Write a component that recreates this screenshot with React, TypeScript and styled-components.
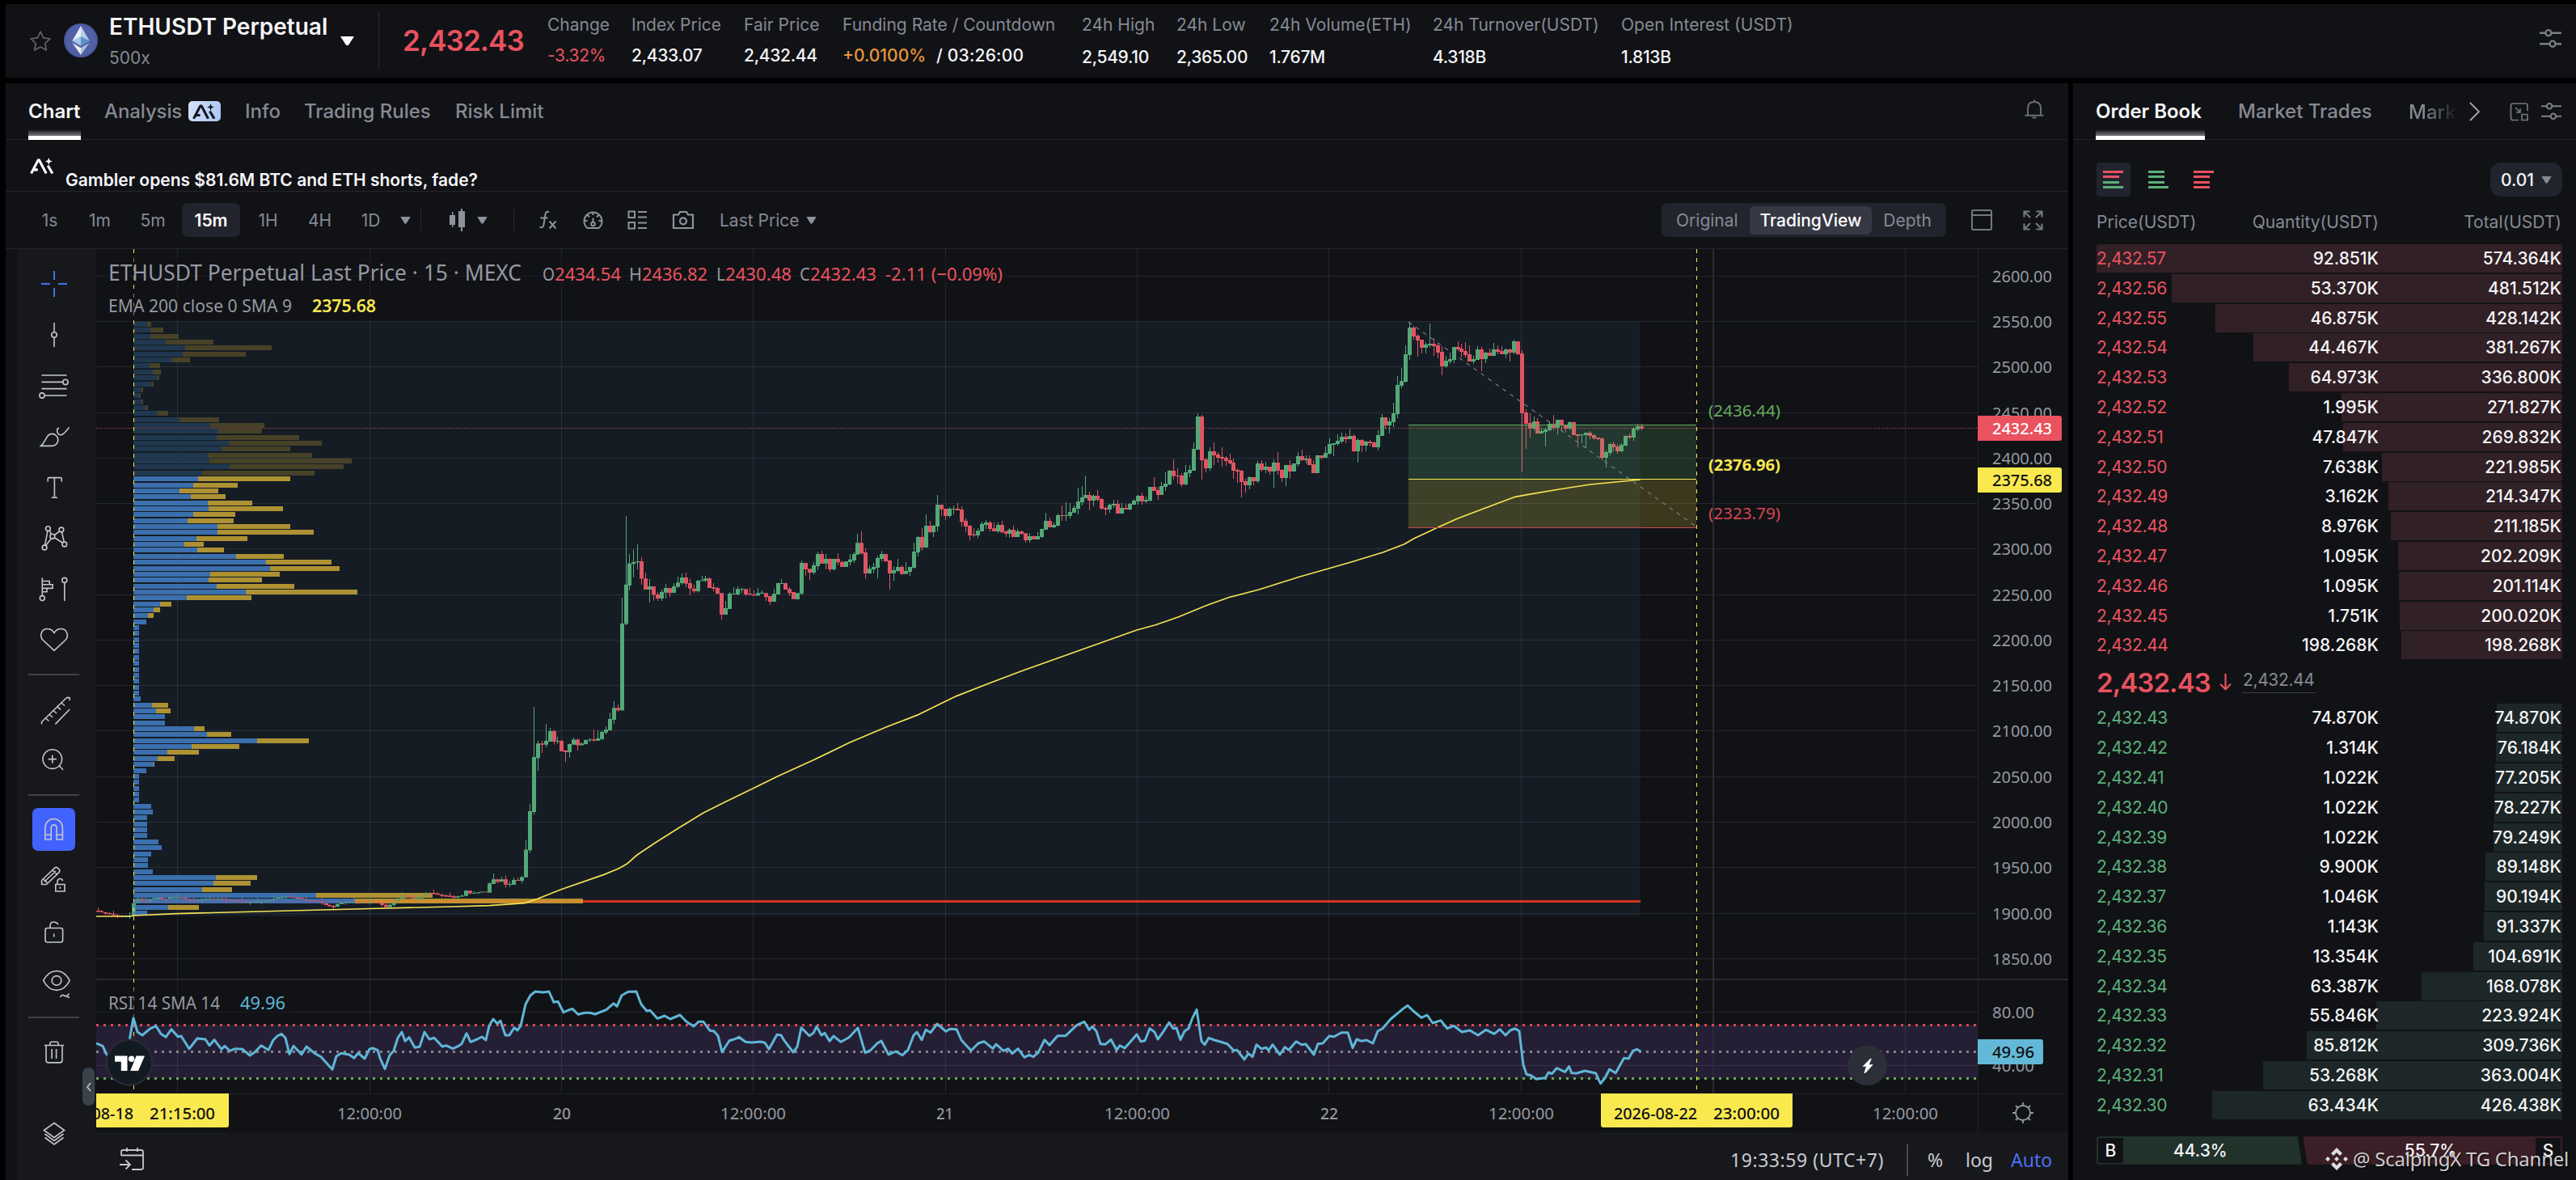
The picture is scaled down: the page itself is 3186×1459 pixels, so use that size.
import React from "react";
import styled, { createGlobalStyle, css } from "styled-components";

const INTER = `Inter, "Liberation Sans", sans-serif`;
const CHART_FONT = `"Noto Sans", "Open Sans", sans-serif`;

const c = {
  panel: "#111216",
  tool: "#17181c",
  line: "#24252b",
  dim: "#868993",
  icon: "#6a6c73",
  white: "#f5f5f7",
  red: "#e9525f",
  green: "#5bb078",
  blue: "#4262ff",
  chip: "#22242d",
};

const Global = createGlobalStyle`
  html, body { margin: 0; padding: 0; background: #000; }
  * { box-sizing: border-box; }
  svg { display: block; flex: none; }
`;

const Page = styled.div`
  width: 3186px;
  height: 1459px;
  padding: 5px 0 0 7px;
  background: #000;
  color: ${c.white};
  font-family: ${INTER};
  font-size: 21px;
  display: flex;
  flex-direction: column;
  gap: 7px;
  overflow: hidden;
`;

const TopBar = styled.header`
  height: 91px;
  flex: none;
  display: flex;
  background: ${c.panel};
  padding-left: 29px;
`;

const StarSlot = styled.div`
  width: 43px;
  padding-top: 32px;
`;
const CoinSlot = styled.div`
  width: 56px;
  padding-top: 24px;
`;
const Pair = styled.div`
  width: 286px;
  display: flex;
  flex-direction: column;
  padding-top: 11px;
`;
const PairName = styled.div`
  font-size: 28px;
  line-height: 34px;
  font-weight: 600;
  letter-spacing: 0;
  white-space: nowrap;
`;
const Leverage = styled.div`
  margin-top: 9px;
  line-height: 26px;
  color: ${c.dim};
`;
const Caret = styled.i<{ $w?: number; $h?: number; $color?: string; $ml?: number; $mt?: number }>`
  flex: none;
  width: ${(p) => p.$w ?? 13}px;
  height: ${(p) => p.$h ?? 9}px;
  margin-left: ${(p) => p.$ml ?? 0}px;
  margin-top: ${(p) => p.$mt ?? 0}px;
  background: ${(p) => p.$color ?? "#8f929c"};
  clip-path: polygon(0 0, 100% 0, 58% 100%, 42% 100%);
`;
const VRule = styled.i<{ $h: number; $ml?: number; $mt?: number; $w?: number; $color?: string }>`
  flex: none;
  width: ${(p) => p.$w ?? 1}px;
  height: ${(p) => p.$h}px;
  margin-left: ${(p) => p.$ml ?? 0}px;
  margin-top: ${(p) => p.$mt ?? 0}px;
  background: ${(p) => p.$color ?? "#2a2b31"};
`;
const BigPrice = styled.div`
  margin-left: 29px;
  width: 179px;
  padding-top: 24px;
  font-size: 35px;
  line-height: 42px;
  font-weight: 600;
  letter-spacing: -0.9px;
  color: ${c.red};
`;
const Stat = styled.div<{ $w: number; $gap?: number }>`
  width: ${(p) => p.$w}px;
  flex: none;
  display: flex;
  flex-direction: column;
  gap: ${(p) => p.$gap ?? 12}px;
  padding-top: 13px;
  line-height: 26px;
  white-space: nowrap;
`;
const StatLabel = styled.div`
  color: ${c.dim};
`;
const StatValue = styled.div<{ $color?: string; $light?: boolean }>`
  font-weight: ${(p) => (p.$light ? 400 : 500)};
  letter-spacing: -0.3px;
  color: ${(p) => p.$color ?? c.white};
`;
const Orange = styled.span`
  color: #e8963a;
  margin-right: 13px;
  letter-spacing: 0;
`;
const Countdown = styled.span`
  letter-spacing: 0.2px;
`;
const TopSettings = styled.div`
  margin-left: auto;
  padding: 29px 18px 0 0;
`;

const Columns = styled.div`
  flex: 1;
  display: flex;
  gap: 6px;
  min-height: 0;
`;
const MainPanel = styled.main`
  width: 2551px;
  flex: none;
  background: ${c.panel};
  display: flex;
  flex-direction: column;
`;

const TabBar = styled.nav<{ $pl: number }>`
  height: 70px;
  flex: none;
  display: flex;
  padding-left: ${(p) => p.$pl}px;
  border-bottom: 1px solid ${c.line};
`;
const Tab = styled.div<{ $on?: boolean; $w: number; $ls?: number; $ml?: number }>`
  height: 70px;
  flex: none;
  margin-right: 29px;
  margin-left: ${(p) => p.$ml ?? 0}px;
  width: ${(p) => p.$w}px;
  display: flex;
  align-items: center;
  gap: 8px;
  padding-bottom: 1px;
  font-size: 24px;
  font-weight: ${(p) => (p.$on ? 600 : 500)};
  letter-spacing: ${(p) => p.$ls ?? 0}px;
  white-space: nowrap;
  color: ${(p) => (p.$on ? c.white : c.dim)};
  ${(p) =>
    p.$on &&
    css`
      background: linear-gradient(#fff, #fff) bottom / 100% 5px no-repeat,
        linear-gradient(to top, rgba(255, 255, 255, 0.45), rgba(255, 255, 255, 0)) bottom 5px left 0 / 100% 8px
          no-repeat;
    `}
`;
const AiBadge = styled.span`
  width: 40px;
  height: 25px;
  border-radius: 5px;
  background: linear-gradient(110deg, #d7e3f8, #a9c4f2);
  display: flex;
  align-items: center;
  justify-content: center;
`;
const BellSlot = styled.div`
  margin-left: auto;
  padding: 20px 30px 0 0;
`;

const NewsRow = styled.div`
  height: 64px;
  flex: none;
  display: flex;
  gap: 13px;
  padding: 22px 0 0 30px;
  border-bottom: 1px solid ${c.line};
`;
const NewsText = styled.div`
  padding-top: 15px;
  line-height: 26px;
  font-weight: 600;
  font-size: 21px;
  white-space: nowrap;
`;

const ToolRow = styled.div`
  height: 71px;
  flex: none;
  display: flex;
  align-items: center;
  padding: 0 31px 0 28px;
  border-bottom: 1px solid ${c.line};
`;
const Intervals = styled.div`
  display: flex;
  gap: 6px;
`;
const Interval = styled.div<{ $on?: boolean; $w: number }>`
  width: ${(p) => p.$w}px;
  height: 42px;
  display: flex;
  align-items: center;
  justify-content: center;
  border-radius: 7px;
  color: ${(p) => (p.$on ? "#fff" : c.dim)};
  background: ${(p) => (p.$on ? c.chip : "transparent")};
  font-weight: ${(p) => (p.$on ? 600 : 400)};
`;
const IconSlot = styled.div<{ $ml: number; $pt?: number }>`
  margin-left: ${(p) => p.$ml}px;
  padding-top: ${(p) => p.$pt ?? 0}px;
`;
const LastPrice = styled.div`
  margin-left: 31px;
  width: 99px;
  color: ${c.dim};
  white-space: nowrap;
`;
const Segmented = styled.div`
  margin-left: auto;
  width: 352px;
  height: 42px;
  display: flex;
  align-items: center;
  padding: 0 4px;
  border-radius: 7px;
  background: ${c.chip};
`;
const Segment = styled.div<{ $on?: boolean; $w: number }>`
  width: ${(p) => p.$w}px;
  height: 35px;
  display: flex;
  align-items: center;
  justify-content: center;
  border-radius: 6px;
  color: ${(p) => (p.$on ? "#fff" : c.dim)};
  background: ${(p) => (p.$on ? "#363844" : "transparent")};
  font-weight: ${(p) => (p.$on ? 500 : 400)};
`;

const ChartBody = styled.div`
  flex: 1;
  display: flex;
  min-height: 0;
  padding-left: 14px;
`;
const DrawBar = styled.aside`
  position: relative;
  width: 98px;
  flex: none;
  display: flex;
  flex-direction: column;
  align-items: center;
  padding: 12px 7px 0 0;
  background: ${c.tool};
`;
const DrawSlot = styled.div<{ $h: number }>`
  height: ${(p) => p.$h}px;
  flex: none;
  display: flex;
  align-items: center;
`;
const DrawRule = styled.i`
  width: 63px;
  height: 2px;
  background: #414247;
`;
const MagnetBox = styled.div`
  width: 53px;
  height: 53px;
  border-radius: 7px;
  background: ${c.blue};
  display: flex;
  align-items: center;
  justify-content: center;
`;
const Handle = styled.div`
  position: absolute;
  left: 81px;
  top: 1012px;
  width: 15px;
  height: 47px;
  border-radius: 7px;
  background: #3a424c;
  display: flex;
  align-items: center;
  justify-content: center;
`;
const ChartCol = styled.div`
  width: 2439px;
  display: flex;
  flex-direction: column;
`;
const BottomBar = styled.footer`
  flex: 1;
  display: flex;
  align-items: center;
  background: ${c.tool};
  padding: 9px 19px 0 28px;
`;
const BottomText = styled.div<{ $ml?: number; $w: number; $color?: string; $ls?: number }>`
  margin-left: ${(p) => p.$ml ?? 0}px;
  width: ${(p) => p.$w}px;
  font-family: ${CHART_FONT};
  font-size: 23px;
  line-height: 32px;
  letter-spacing: ${(p) => p.$ls ?? 0}px;
  white-space: nowrap;
  color: ${(p) => p.$color ?? "#c9cbd1"};
`;
const Spacer = styled.div`
  flex: 1;
`;

/* ---------- order book ---------- */
const Book = styled.section`
  position: relative;
  width: 622px;
  flex: none;
  background: ${c.panel};
  display: flex;
  flex-direction: column;
`;
const FadeTab = styled.div`
  width: 62px;
  height: 70px;
  margin-left: 14px;
  display: flex;
  align-items: center;
  font-size: 24px;
  font-weight: 500;
  color: transparent;
  background: linear-gradient(90deg, ${c.dim} 30%, rgba(134, 137, 147, 0.05) 95%);
  background-clip: text;
`;
const BookTools = styled.div`
  height: 71px;
  display: flex;
  padding: 28px 17px 0 29px;
`;
const DepthMode = styled.div<{ $on?: boolean; $mr: number }>`
  width: 42px;
  height: 42px;
  margin-right: ${(p) => p.$mr}px;
  border-radius: 4px;
  background: ${(p) => (p.$on ? c.chip : "transparent")};
  display: flex;
  flex-direction: column;
  padding: 10px 0 0 8px;
  gap: 3px;
`;
const DepthLine = styled.i<{ $w: number; $color: string }>`
  width: ${(p) => p.$w}px;
  height: 3px;
  margin-bottom: 0.4px;
  background: ${(p) => p.$color};
`;
const TickPill = styled.div`
  margin-left: auto;
  width: 89px;
  height: 42px;
  border-radius: 13px;
  background: ${c.chip};
  display: flex;
  align-items: center;
  padding-left: 13px;
  font-weight: 500;
`;
const BookHead = styled.div`
  height: 58px;
  display: grid;
  grid-template-columns: 148px 201px 1fr;
  padding: 16px 18px 0 29px;
  line-height: 30px;
  color: ${c.dim};
`;
const Cell = styled.div<{ $right?: boolean }>`
  text-align: ${(p) => (p.$right ? "right" : "left")};
`;
const Rows = styled.div`
  display: flex;
  flex-direction: column;
  gap: 1.8px;
  padding: 0 17px 0 29px;
`;
const Row = styled.div<{ $side: "ask" | "bid" }>`
  height: 35px;
  flex: none;
  display: grid;
  grid-template-columns: 148px 201px 1fr;
  align-items: center;
  padding-right: 1px;
  font-weight: 500;
  background-repeat: no-repeat;
  background-position: right top;
  background-image: ${(p) =>
    p.$side === "ask" ? "linear-gradient(#312026, #312026)" : "linear-gradient(#1d2727, #1d2727)"};
  ${Cell}:first-child {
    color: ${(p) => (p.$side === "ask" ? c.red : c.green)};
    font-weight: 400;
    letter-spacing: -0.35px;
  }
`;
const MidRow = styled.div`
  height: 55px;
  flex: none;
  display: flex;
  padding-left: 29px;
`;
const MidPrice = styled.div`
  width: 152px;
  padding-top: 8px;
  font-size: 33px;
  line-height: 42px;
  font-weight: 600;
  letter-spacing: -0.9px;
  color: ${c.red};
`;
const FairPrice = styled.div`
  margin-left: 14px;
  margin-top: 13px;
  height: 29px;
  line-height: 26px;
  letter-spacing: -0.35px;
  color: ${c.dim};
  border-bottom: 1px dotted #6b6e78;
`;
const Ratio = styled.div`
  display: flex;
  gap: 1px;
  margin: 21px 17px 0 29px;
  height: 35px;
  flex: none;
  font-weight: 500;
`;
const RatioSide = styled.div<{ $w: number; $sell?: boolean }>`
  width: ${(p) => p.$w}px;
  display: flex;
  flex-direction: ${(p) => (p.$sell ? "row-reverse" : "row")};
  padding: 2px;
  border-radius: 3px;
  background: ${(p) => (p.$sell ? "#3b1f27" : "#21322b")};
  clip-path: ${(p) =>
    p.$sell ? "polygon(0 0, 100% 0, 100% 100%, 6px 100%)" : "polygon(0 0, calc(100% - 5px) 0, 100% 100%, 0 100%)"};
`;
const RatioTag = styled.div`
  width: 31px;
  background: ${c.panel};
  border-radius: 2px;
  display: flex;
  align-items: center;
  justify-content: center;
`;
const RatioPct = styled.div<{ $pad: string }>`
  padding: ${(p) => p.$pad};
  line-height: 32px;
`;
const Watermark = styled.div`
  position: absolute;
  left: 312px;
  top: 1312px;
  display: flex;
  align-items: center;
  gap: 6px;
  font-family: ${CHART_FONT};
  font-size: 24px;
  line-height: 36px;
  letter-spacing: -0.25px;
  white-space: nowrap;
  color: rgba(225, 225, 228, 0.92);
  text-shadow: 1px 1px 2px #000;
`;

/* ---------- icons ---------- */
const Stroke = ({
  d,
  size = 44,
  color = "#c4c6cc",
  sw = 1.6,
  box = 44,
  children,
}: {
  d?: string;
  size?: number;
  color?: string;
  sw?: number;
  box?: number;
  children?: React.ReactNode;
}) => (
  <svg width={size} height={size} viewBox={`0 0 ${box} ${box}`} fill="none" stroke={color} strokeWidth={sw}>
    {d && <path d={d} />}
    {children}
  </svg>
);

const AiMark = ({ color, w = 30 }: { color: string; w?: number }) => (
  <svg width={w} height={w * 0.65} viewBox="0 0 30 19.5" fill="none" stroke={color} strokeWidth="3">
    <path d="M1.5 18.8 9.6 3.4Q10.5 2.2 11.4 3.4L19.5 18.8M4.8 14.4H9.5" />
    <path d="M21.5 9.5 27 18.8" />
    <path d="M22.5 0 23.7 3.2 26.9 4.4 23.7 5.6 22.5 8.8 21.3 5.6 18.1 4.4 21.3 3.2Z" fill={color} stroke="none" />
  </svg>
);

const EthLogo = () => (
  <svg width="42" height="42" viewBox="0 0 42 42">
    <circle cx="21" cy="21" r="21" fill="#4c5aa0" />
    <circle cx="21" cy="21" r="18.5" fill="#5260a6" />
    <path d="M21 3 10.5 21.3 21 27.5Z" fill="#e9eff7" />
    <path d="M21 3 31.5 21.3 21 27.5Z" fill="#b9cfe6" />
    <path d="M21 16 10.5 21.3 21 27.5Z" fill="#a3c4e6" />
    <path d="M21 16 31.5 21.3 21 27.5Z" fill="#5b92c8" />
    <path d="M10.5 24 21 30.3V39Z" fill="#e9eff7" />
    <path d="M31.5 24 21 30.3V39Z" fill="#a9c3de" />
  </svg>
);

const Sliders = ({ s, color = "#7d7f86" }: { s: number; color?: string }) => (
  <svg width={s} height={s} viewBox="0 0 26 26" fill="none" stroke={color} strokeWidth="2.2">
    <path d="M0 6.5H7M14 6.5H26M0 19.5H12M19 19.5H26" />
    <circle cx="10.5" cy="6.5" r="3.4" />
    <circle cx="15.5" cy="19.5" r="3.4" />
  </svg>
);

/* ---------- chart data ---------- */
const GRID_X = [219.5, 457.5, 694.5, 931.5, 1169.5, 1406.5, 1643.5, 1881.5, 2356.5];
const yOf = (p: number) => Math.floor(341.3 + (2600 - p) * 1.1253);
const PRICES = Array.from({ length: 16 }, (_, i) => 2600 - i * 50);

type Bar = [number, number, number, number, number];

// Each bar: direction, body top, body bottom, wick top, wick bottom.
const SEG_A: Bar[] = [
  [0,1328,1332,1325,1334],[1,1328,1332,1326,1333],[1,1326,1329,1322,1330],[1,1310,1327,1308,1328],[0,1310,1318,1310,1322],
  [1,1317,1319,1312,1319],[1,1315,1318,1315,1318],[1,1313,1316,1313,1316],[0,1313,1316,1313,1316],[1,1286,1316,1283,1316],
  [1,1273,1288,1254,1288],[0,1273,1281,1271,1286],[1,1273,1281,1266,1281],[0,1273,1290,1260,1300],[1,1288,1291,1279,1298],
  [1,1275,1291,1267,1291],[0,1275,1278,1267,1278],[1,1266,1278,1262,1286],[1,1177,1267,1147,1267],[1,1053,1179,1030,1187],
  [1,878,1056,716,1064],[1,834,881,826,923],[0,834,838,826,865],[1,826,838,771,847],[1,794,828,784,828],
  [0,794,828,790,838],[1,826,828,813,836],[0,826,860,822,860],[0,857,862,855,894],[1,836,862,834,880],
  [1,822,838,815,838],[0,822,840,818,857],[1,834,840,831,840],[1,823,836,821,838],[1,821,824,817,830],
  [0,821,825,789,828],[1,818,825,792,826],[1,797,821,793,821],[1,789,799,779,805],[1,755,792,735,792],
  [1,719,758,698,771],[0,719,727,708,732],[1,447,727,363,729],[1,321,448,99,452],[1,253,324,222,340],
  [1,248,254,208,298],[1,246,249,191,272],[0,246,302,233,321],[0,301,337,282,337],[1,327,337,303,379],
  [0,327,354,327,372],[0,353,366,345,374],[1,345,366,337,374],[1,332,347,319,366],[0,332,348,332,361],
  [1,327,348,316,348],[1,314,328,295,332],[1,298,316,285,321],[0,298,318,282,329],[0,316,334,301,355],
  [0,334,342,321,348],[1,308,342,306,347],[1,307,310,293,310],[1,301,308,293,313],[0,301,332,298,332],
  [0,329,334,316,342],[0,332,350,328,353],[0,348,418,348,434],[1,397,418,374,418],[1,350,400,345,400],
  [1,350,353,329,353],[1,335,353,327,355],[1,335,337,331,348],[0,335,353,335,358],[0,350,354,332,354],
  [0,353,357,340,357],[1,348,357,332,357],[1,347,350,340,350],[0,348,361,348,374],[0,358,376,358,387],
  [1,350,376,335,376],[1,316,353,314,353],[1,316,318,303,318],[0,316,337,314,337],[0,335,348,329,358],
  [0,345,368,345,368],[1,348,368,348,368],[1,251,350,243,355],[0,251,272,251,292],[0,270,282,270,306],
  [1,259,282,248,288],[1,222,261,214,274],[0,222,253,212,253],[1,238,253,222,272],[0,238,272,235,280],
  [1,238,272,238,276],[0,238,249,220,259],[0,248,264,243,264],[1,246,264,246,264],[1,240,248,222,259],
  [1,222,243,216,251],[1,186,224,157,224],[0,186,220,149,224],[0,217,285,204,301],[1,270,285,259,287],
  [1,264,272,251,284],[1,235,267,227,301],[1,222,238,212,246],[0,222,246,222,246],[0,243,285,240,337],
  [1,274,285,261,308],[1,264,277,238,279],[0,264,287,259,290],[1,277,287,248,287],[1,264,280,264,293],
  [1,214,267,186,267],[1,167,217,165,230],[0,167,201,139,212],[1,131,201,94,201],[0,131,152,115,154],
  [1,131,152,128,167],[1,63,133,31,149],[0,63,78,63,99],[0,76,99,76,112],[1,76,99,71,105],
  [1,76,78,65,94],[0,76,81,57,81],[0,78,118,68,133],[0,115,133,107,152],[0,131,162,128,178],
  [0,159,162,139,167],[1,147,162,139,172],[1,125,149,118,149],[1,120,128,112,141],[0,120,141,115,149],
  [0,139,149,120,149],[1,128,149,120,154],[0,128,152,115,154],[0,149,157,147,167],[1,144,157,139,170],
  [0,144,167,131,167],[1,149,167,141,167],
];
const SEG_B: Bar[] = [
  [0,531,541,528,543],[0,538,564,538,573],[1,549,564,537,573],[0,549,561,546,561],[1,549,561,534,561],
  [1,522,552,522,555],[1,492,525,462,525],[0,492,516,480,516],[1,507,516,498,519],[1,471,510,465,513],
  [0,471,474,435,492],[1,471,474,423,492],[1,459,473,426,483],[1,444,462,435,462],[1,420,447,369,468],
  [1,405,423,363,435],[1,396,408,324,408],[0,396,417,384,453],[1,399,417,393,438],[0,399,414,378,420],
  [0,411,447,408,450],[0,444,450,438,471],[1,432,450,429,462],[1,429,435,414,444],[0,429,465,414,465],
  [1,444,465,426,465],[0,444,450,429,450],[1,429,450,426,453],[1,417,432,411,432],[1,399,420,396,432],
  [0,399,420,387,432],[1,414,420,402,426],[1,366,417,366,420],[0,366,381,330,381],[0,378,396,366,414],
  [1,363,396,348,396],[1,354,366,312,381],[1,306,357,303,360],[0,306,326,264,339],[0,324,327,297,354],
  [0,324,357,315,366],[1,312,357,285,360],[1,303,315,285,330],[1,225,306,201,306],[1,105,228,93,228],
  [0,105,267,99,339],[0,264,297,258,312],[1,234,297,219,306],[0,234,249,201,285],[0,246,258,237,276],
  [0,255,261,219,291],[0,258,270,252,288],[0,267,279,243,282],[0,276,306,261,336],[0,303,309,297,351],
  [0,306,348,303,405],[0,345,360,336,387],[1,330,360,327,375],[0,330,345,330,360],[1,279,345,270,351],
  [0,279,303,267,309],[1,291,303,273,315],[0,291,309,291,321],[1,276,309,264,369],[0,276,306,237,321],
  [0,303,333,300,348],[1,285,333,285,363],[0,285,309,267,336],[1,279,309,279,309],[1,252,282,237,291],
  [0,252,267,228,270],[1,261,267,249,279],[0,261,285,249,285],[0,282,315,267,315],[1,249,315,249,315],
  [0,249,258,249,264],[1,240,258,216,258],[1,207,243,186,246],[1,204,210,204,252],[1,195,207,171,213],
  [1,180,198,165,204],[0,180,189,168,204],[1,177,189,153,189],[0,177,234,171,237],[1,192,234,186,276],
  [0,192,213,189,237],[1,198,213,195,234],[0,198,204,192,216],[0,201,219,198,219],[1,174,219,156,231],
  [1,108,177,96,177],[0,108,138,108,150],[1,123,138,111,168],[1,93,126,54,144],
];
const SEG_C: Bar[] = [
  [1,288,396,255,411],[1,273,291,225,300],[1,174,276,141,279],[1,75,177,54,195],[0,75,108,70,120],
  [0,105,123,99,183],[0,120,150,120,171],[1,138,150,129,171],[1,135,141,60,150],[0,135,144,115,180],
  [0,141,168,135,189],[0,165,219,144,252],[1,198,219,180,225],[1,192,201,168,210],[1,147,195,147,207],
  [0,147,156,126,162],[0,153,165,135,186],[0,162,177,129,186],[0,174,201,141,201],[1,192,201,180,210],
  [1,156,195,144,195],[0,156,192,147,237],[1,168,192,165,207],[0,168,180,153,180],[1,156,180,132,180],
  [0,156,165,141,174],[0,162,174,144,174],[1,156,174,153,189],[0,156,168,153,201],[1,126,168,120,174],
  [0,126,174,126,177],[0,171,393,159,609],[0,390,432,378,525],[0,429,450,393,483],[1,423,450,405,456],
  [0,423,468,411,468],[1,459,468,447,468],[1,453,462,447,516],[1,432,456,423,459],[0,432,447,399,456],
  [1,417,447,417,471],[0,417,438,417,459],[0,435,450,435,462],[1,426,450,423,456],[0,426,474,423,474],
  [0,471,477,471,519],[1,471,474,471,504],[1,465,474,465,522],[0,465,477,459,489],[0,474,486,471,492],
  [0,483,489,483,492],[0,486,558,483,567],[1,537,558,531,594],[1,507,540,504,549],[0,507,519,498,534],
  [0,516,534,507,543],[1,510,534,504,537],[1,477,513,474,516],[0,477,483,468,489],[1,450,483,444,495],
  [1,441,453,432,459],[0,441,450,432,456],
];
// Closing levels of the flat stretch before the first rally.
const FLAT: [number, number][] = [
  [119,1126],[126,1128],[134,1130],[148,1133],[158,1132],[163,1132],[166,1110],[173,1112],[178,1117],[186,1111],[195,1110],
  [203,1112],[210,1109],[220,1109],[230,1112],[240,1114],[252,1111],[268,1111],[285,1113],[305,1115],[330,1114],
  [342,1110],[354,1108],[366,1110],[376,1113],[392,1114],[402,1119],[413,1121],[420,1116],[435,1114],[455,1115],
  [468,1116],[476,1122],[483,1118],[490,1112],[497,1107],[505,1108],[512,1111],[520,1110],[526,1104],[533,1104],
  [545,1107],[560,1108],
];
const PITCH = 4.947;
const ORIGIN = 694.4;
const flatAt = (x: number) => {
  for (let i = 1; i < FLAT.length; i++) {
    const [x0, y0] = FLAT[i - 1];
    const [x1, y1] = FLAT[i];
    if (x <= x1) return y0 + ((y1 - y0) * (x - x0)) / (x1 - x0);
  }
  return FLAT[FLAT.length - 1][1];
};

type Candle = { x: number; up: boolean; t: number; b: number; h: number; l: number };
const candles: Candle[] = [];
for (let n = -116; n < -27; n++) {
  const x = ORIGIN + n * PITCH;
  const prev = n === -116 ? 1126 : flatAt(x - PITCH);
  const cur = flatAt(x);
  const up = cur < prev || (Math.abs(cur - prev) < 0.3 && n % 2 === 0);
  const t = Math.min(prev, cur);
  const b = Math.max(prev, cur, t + 1.5);
  candles.push({ x, up, t, b, h: t - ((n * 7) % 4 === 0 ? 4 : 1), l: b + ((n * 5) % 3 === 0 ? 2 : 0) });
}
const add = (seg: Bar[], start: number, base: number, k: number) =>
  seg.forEach(([d, t, b, h, l], i) =>
    candles.push({
      x: ORIGIN + (start + i) * PITCH,
      up: d === 1,
      t: base + t / k,
      b: base + b / k,
      h: base + h / k,
      l: base + l / k,
    })
  );
add(SEG_A, -27, 600, 2.613);
add(SEG_B, 115, 480, 3);
add(SEG_C, 209, 380, 3);

const pathOf = (list: Candle[], up: boolean) =>
  list
    .filter((k) => k.up === up)
    .map((k) => {
      const x = Math.round(k.x);
      const h = Math.max(1, k.b - k.t);
      return `M${x - 2} ${k.t.toFixed(1)}h5v${h.toFixed(1)}h-5zM${x} ${k.h.toFixed(1)}h1V${k.l.toFixed(1)}h-1z`;
    })
    .join("");

// Volume profile rows: blue end and yellow end, measured from the same left edge.
const VP: [number, number][] = [
  [510,524],[521,566],[521,619],[574,739],[641,941],[633,851],[596,658],[518,554],[529,557],[546,552],
  [524,532],[490,496],[482,487],[490,496],[504,512],[543,582],[622,759],[728,916],[756,907],[750,1036],
  [792,1114],[767,1005],[720,1081],[725,1218],[795,1190],[700,1089],[686,1005],[669,823],[622,756],[661,781],
  [720,874],[722,980],[669,815],[650,809],[753,1005],[753,1086],[680,857],[638,706],[683,776],[818,983],
  [921,1148],[935,1176],[728,969],[722,907],[750,1019],[851,1238],[647,871],[554,594],[532,554],[512,532],
  [507,507],[482,482],[482,482],[482,482],[482,482],[482,482],[482,482],[482,482],[482,482],[482,482],
  [482,482],[482,482],[482,482],[487,487],[526,582],[540,591],[571,571],[571,571],[672,708],[717,801],
  [890,1070],[664,829],[580,689],[546,605],[532,535],[507,507],[482,482],[482,482],[482,482],[482,482],
  [482,482],[524,524],[529,529],[510,510],[510,510],[510,510],[510,510],[549,549],[560,560],[524,524],
  [512,512],[512,512],[529,529],[748,890],[739,868],[700,804],[1095,1498],[1229,2019],[582,689],[510,510],
];
const VPBars = () => (
  <g shapeRendering="crispEdges">
    {VP.map(([a, b], i) => {
      const y = Math.round(398 + i * 7.354);
      const lit = i >= 26;
      const xa = a / 2.8;
      const xb = b / 2.8;
      return (
        <React.Fragment key={i}>
          <rect x={165} y={y} width={xa - 165} height={6} fill={lit ? "#3b6fad" : "#20384f"} />
          {xb > xa && <rect x={xa} y={y} width={xb - xa} height={6} fill={lit ? "#ad9133" : "#474227"} />}
        </React.Fragment>
      );
    })}
  </g>
);

const EMA =
  "119,1133 160,1133 166,1132 219,1129.7 321,1127 457,1123.5 560,1121 605,1119.7 649,1116.6 665,1111.3 694,1099.8 747,1081.4 765,1074 776,1067.7 788,1057 812,1041 839,1024 870,1005 895,992.6 931,975 962,959.7 1006,939.8 1051,918 1096,899 1136,883.6 1183,860.6 1221,845.7 1260,831 1330,806 1406,779 1429,772.7 1457,763 1493,748.3 1521,738.3 1557,729 1607,713.3 1643,703 1671,695 1711,682.7 1737,672.7 1749,665.7 1778,652.3 1803,641 1838,627.7 1874,614.3 1889,611.7 1928,605 1967,599 2029,593";

const RSI_A: number[] = [
  9,270,17,280,22,312,30,318,45,300,50,260,55,175,60,228,66,240,76,215,83,206,89,235,95,247,102,218,110,245,114,243,124,290,134,252,144,255,
  149,278,155,257,164,292,168,280,174,298,181,290,190,292,199,315,205,303,213,278,222,295,228,258,233,243,238,235,243,250,
  248,310,253,280,263,311,269,282,280,309,287,320,301,367,306,318,312,307,322,312,328,325,333,306,341,327,347,292,351,288,
  357,295,360,325,366,365,372,314,377,298,382,250,387,228,391,262,396,248,403,286,409,283,415,228,421,255,427,250,437,282,
  442,278,450,290,457,280,461,272,467,233,472,265,480,255,486,246,491,258,495,205,500,180,505,197,509,186,515,240,520,240,
  526,212,530,222,534,205,540,125,546,92,552,78,562,81,569,78,575,118,580,115,587,155,593,147,598,142,605,163,613,157,
  620,157,626,162,640,145,649,122,653,133,659,92,667,79,677,78,683,125,690,150,694,148,703,178,712,168,719,180,731,165,
  739,190,748,207,754,190,760,190,768,223,773,225,778,242,783,302,792,260,798,255,804,247,812,265,820,267,830,264,836,268,
  841,292,851,238,856,240,860,260,871,303,876,283,881,212,891,242,896,232,900,208,906,240,910,232,916,262,921,243,930,265,
  940,248,951,213,960,305,967,295,975,270,980,261,989,312,998,300,1006,314,1013,295,1020,240,1024,228,1030,257,1035,220,
  1041,230,1049,198,1060,226,1065,217,1073,218,1079,258,1091,297,1100,270,1107,263,1118,290,1122,273,1131,298,1137,290,
  1142,308,1149,290,1157,322,1163,313,1168,320,1174,305,1182,257,1188,277,1198,242,1208,242,1222,202,1231,190,1237,220,
  1241,208,1246,225,1251,272,1257,274,1264,256,1271,295,1275,278,1281,288,1288,265,1296,237,1301,263,1306,260,1312,215,
  1318,228,1322,255,1328,230,1336,193,1341,215,1345,213,1350,257,1355,225,1360,215,1365,175,1370,145,1376,262,1380,275,
  1385,250,1392,258,1400,265,1408,272,1416,297,1420,295,1429,330,1434,308,1439,320,1444,275,1450,290,1456,286,1459,296,
  1464,275,1473,312,1479,284,1484,295,1493,263,1500,275,1505,273,1515,312,1520,272,1526,270,1534,243,1540,245,1549,230,
  1557,230,1563,287,1568,255,1574,262,1580,258,1588,270,1594,225,1600,215,1610,180,1618,160,1626,140,1631,130,1638,150,
  1648,175,1655,165,1662,195,1672,185,1680,215,1688,205,1698,228,1708,222,1718,240,1728,220,1738,235,1745,218,1752,240,
  1758,222,1764,215,1769,225,1774,350,1778,385,1784,390,
];
const RSI_B: number[] = [
  0,463,25,458,34,438,43,443,57,422,80,436,91,416,98,440,112,441,135,432,165,441,178,479,190,460,203,426,220,440,243,385,
  256,387,268,358,279,352,290,361,
];
const rsiPoints = (() => {
  const out: string[] = [];
  for (let i = 0; i < RSI_A.length; i += 2) out.push(`${110 + RSI_A[i]},${(1200 + RSI_A[i + 1] / 3).toFixed(1)}`);
  for (let i = 0; i < RSI_B.length; i += 2)
    out.push(`${(1900 + RSI_B[i] / 2.24).toFixed(1)},${(1180 + RSI_B[i + 1] / 3).toFixed(1)}`);
  return out.join(" ");
})();

const Txt = ({
  x,
  x2,
  y,
  s = 20,
  fill = "#9598a1",
  b = 400,
  children,
}: {
  x: number;
  x2: number;
  y: number;
  s?: number;
  fill?: string;
  b?: number;
  children: string;
}) => (
  <text
    x={x}
    y={y}
    fontSize={s}
    fill={fill}
    fontWeight={b}
    fontFamily={CHART_FONT}
    textLength={x2 - x}
    lengthAdjust="spacingAndGlyphs"
  >
    {children}
  </text>
);

const PriceChart = () => (
  <svg width="2439" height="1092" viewBox="119 308 2439 1092">
    <rect x="165" y="397" width="1864" height="736" fill="#151c24" />
    <rect x="119" y="1267" width="2327" height="66.5" fill="#251f36" />
    <g stroke="rgba(120,123,145,0.2)" strokeWidth="1">
      {PRICES.map((p) => (
        <path key={p} d={`M119 ${yOf(p) + 0.5}H2446`} />
      ))}
      <path d="M119 1251.5H2446M119 1317.5H2446" />
      {GRID_X.map((x) => (
        <path key={x} d={`M${x} 308V1352`} />
      ))}
      <path d="M2446.5 308V1400M119 1352.5H2558" stroke="#1f2025" />
    </g>
    <path d="M2119 308V1352" stroke="#2a2a34" strokeWidth="2" />
    <path d="M119 1211H2558" stroke="#2a2b30" strokeWidth="2" />

    <path d="M165 1114.5H2029" stroke="#d8331f" strokeWidth="3" />
    <path d={pathOf(candles, true)} fill="#54a878" />
    <path d={pathOf(candles, false)} fill="#de5564" />
    <VPBars />
    <path d="M165 1114.5H439" stroke="#5b6bae" strokeWidth="2" />
    <path d="M439 1114.5H721" stroke="#dd8a2c" strokeWidth="2.5" />
    <g opacity="0.5">
      <path d={pathOf(candles.slice(8, 90), true)} fill="#54a878" />
      <path d={pathOf(candles.slice(8, 90), false)} fill="#de5564" />
    </g>
    <polyline points={EMA} fill="none" stroke="#f4e356" strokeWidth="1.7" strokeLinejoin="round" />

    <rect x="1742" y="525.5" width="356" height="67" fill="rgba(102,187,106,0.18)" />
    <rect x="1742" y="592.5" width="356" height="60" fill="rgba(255,235,59,0.18)" />
    <path d="M1742 525.5H2098" stroke="#66ac5c" />
    <path d="M1742 592.5H2098" stroke="#f9e94f" />
    <path d="M1742 652.5H2098" stroke="#c8464e" />
    <path d="M1742 398L2098 651" stroke="#787b86" strokeDasharray="5 6" strokeWidth="1.2" />
    <path d="M119 529.5H2446" stroke="#c9535e" strokeDasharray="1 1.5" />
    <path d="M165.5 308V1352M2098.5 308V1352" stroke="#f9e94f" strokeDasharray="5 6" />

    <g strokeWidth="3" strokeDasharray="3 6">
      <path d="M119 1267.5H2446" stroke="#dc4a4f" />
      <path d="M119 1300.5H2446" stroke="#84848f" />
      <path d="M119 1333.5H2446" stroke="#66ab55" />
    </g>
    <polyline points={rsiPoints} fill="none" stroke="#5fb6d6" strokeWidth="3" strokeLinejoin="round" />

    <rect x="127" y="318" width="1120" height="34" fill="rgba(17,18,22,0.5)" />
    <rect x="127" y="360" width="349" height="36" fill="rgba(17,18,22,0.5)" />
    <rect x="127" y="1222" width="236" height="36" fill="rgba(17,18,22,0.5)" />
    <Txt x={134} x2={645} y={346.5} s={27}>ETHUSDT Perpetual Last Price · 15 · MEXC</Txt>
    <Txt x={671} x2={686} y={347} s={22.5}>O</Txt>
    <Txt x={686} x2={768} y={347} s={22.5} fill={c.red}>2434.54</Txt>
    <Txt x={778} x2={794} y={347} s={22.5}>H</Txt>
    <Txt x={794} x2={875} y={347} s={22.5} fill={c.red}>2436.82</Txt>
    <Txt x={886} x2={897} y={347} s={22.5}>L</Txt>
    <Txt x={897} x2={979} y={347} s={22.5} fill={c.red}>2430.48</Txt>
    <Txt x={989} x2={1002} y={347} s={22.5}>C</Txt>
    <Txt x={1002} x2={1084} y={347} s={22.5} fill={c.red}>2432.43</Txt>
    <Txt x={1095} x2={1240} y={347} s={22.5} fill={c.red}>-2.11 (−0.09%)</Txt>
    <Txt x={134} x2={361} y={386} s={22}>EMA 200 close 0 SMA 9</Txt>
    <Txt x={386} x2={465} y={386} s={22} fill="#f9e94f" b={600}>2375.68</Txt>
    <Txt x={134} x2={272} y={1248} s={22}>RSI 14 SMA 14</Txt>
    <Txt x={297} x2={353} y={1248} s={22} fill="#5fb6d6">49.96</Txt>

    <Txt x={2113} x2={2202} y={515} fill="#66ac5c">(2436.44)</Txt>
    <Txt x={2113} x2={2202} y={582} fill="#f9e94f" b={700}>(2376.96)</Txt>
    <Txt x={2113} x2={2202} y={642} fill="#d5484f">(2323.79)</Txt>

    {PRICES.map((p) => (
      <Txt key={p} x={2464} x2={2538} y={yOf(p) + 7.5}>{`${p}.00`}</Txt>
    ))}
    <Txt x={2464} x2={2516} y={1258.7}>80.00</Txt>
    <Txt x={2464} x2={2516} y={1325}>40.00</Txt>
    <path d="M2446 514H2547Q2550 514 2550 517V542Q2550 545 2547 545H2446Z" fill={c.red} />
    <Txt x={2464} x2={2538} y={537} fill="#fff" b={500}>2432.43</Txt>
    <path d="M2446 578H2547Q2550 578 2550 581V606Q2550 609 2547 609H2446Z" fill="#f9e94f" />
    <Txt x={2464} x2={2538} y={601} fill="#111" b={500}>2375.68</Txt>
    <path d="M2446 1285H2524Q2527 1285 2527 1288V1313Q2527 1316 2524 1316H2446Z" fill="#62b8d6" />
    <Txt x={2464} x2={2516} y={1308} fill="#111" b={500}>49.96</Txt>

    <Txt x={417} x2={497} y={1384}>12:00:00</Txt>
    <Txt x={684} x2={706} y={1384} b={500}>20</Txt>
    <Txt x={891} x2={972} y={1384}>12:00:00</Txt>
    <Txt x={1158} x2={1179} y={1384} b={500}>21</Txt>
    <Txt x={1366} x2={1447} y={1384}>12:00:00</Txt>
    <Txt x={1633} x2={1655} y={1384} b={500}>22</Txt>
    <Txt x={1841} x2={1922} y={1384}>12:00:00</Txt>
    <Txt x={2316} x2={2397} y={1384}>12:00:00</Txt>
    <path d="M46 1352H283V1391Q283 1394 280 1394H46Z" fill="#f9e94f" />
    <Txt x={62} x2={165} y={1384} fill="#111" b={500}>2026-08-18</Txt>
    <Txt x={185} x2={266} y={1384} fill="#111" b={500}>21:15:00</Txt>
    <path d="M1980 1352H2217V1391Q2217 1394 2214 1394H1983Q1980 1394 1980 1391Z" fill="#f9e94f" />
    <Txt x={1996} x2={2099} y={1384} fill="#111" b={500}>2026-08-22</Txt>
    <Txt x={2119} x2={2201} y={1384} fill="#111" b={500}>23:00:00</Txt>

    <circle cx="160" cy="1313.5" r="28" fill="#131b22" stroke="#2d2a3a" strokeWidth="2" />
    <path d="M142 1305.5H157.5V1324H149.8V1312.8H142ZM168.6 1305.5H179L171 1324H161.2Z" fill="#fff" />
    <circle cx="162.6" cy="1309.2" r="3.7" fill="#fff" />
    <circle cx="2309.5" cy="1317.5" r="24.5" fill="#2c2f37" />
    <path d="M2313.5 1309 2304 1318.6H2308.4L2305.8 1326.5H2307.2L2316.2 1316.6H2311.4L2314.4 1309Z" fill="#fff" stroke="#fff" strokeWidth="0.6" />
    <g stroke="#9598a1" strokeWidth="1.8" fill="none">
      <circle cx="2502" cy="1376" r="9" />
      <path d="M2502 1363V1367M2502 1385V1389M2489 1376H2493M2511 1376H2515M2493 1367 2496 1370M2511 1367 2508 1370M2493 1385 2496 1382M2511 1385 2508 1382" />
    </g>
  </svg>
);

/* ---------- order book data ---------- */
type Level = [string, string, string];
const ASKS: Level[] = [
  ["2,432.57", "92.851K", "574.364K"],
  ["2,432.56", "53.370K", "481.512K"],
  ["2,432.55", "46.875K", "428.142K"],
  ["2,432.54", "44.467K", "381.267K"],
  ["2,432.53", "64.973K", "336.800K"],
  ["2,432.52", "1.995K", "271.827K"],
  ["2,432.51", "47.847K", "269.832K"],
  ["2,432.50", "7.638K", "221.985K"],
  ["2,432.49", "3.162K", "214.347K"],
  ["2,432.48", "8.976K", "211.185K"],
  ["2,432.47", "1.095K", "202.209K"],
  ["2,432.46", "1.095K", "201.114K"],
  ["2,432.45", "1.751K", "200.020K"],
  ["2,432.44", "198.268K", "198.268K"],
];
const BIDS: Level[] = [
  ["2,432.43", "74.870K", "74.870K"],
  ["2,432.42", "1.314K", "76.184K"],
  ["2,432.41", "1.022K", "77.205K"],
  ["2,432.40", "1.022K", "78.227K"],
  ["2,432.39", "1.022K", "79.249K"],
  ["2,432.38", "9.900K", "89.148K"],
  ["2,432.37", "1.046K", "90.194K"],
  ["2,432.36", "1.143K", "91.337K"],
  ["2,432.35", "13.354K", "104.691K"],
  ["2,432.34", "63.387K", "168.078K"],
  ["2,432.33", "55.846K", "223.924K"],
  ["2,432.32", "85.812K", "309.736K"],
  ["2,432.31", "53.268K", "363.004K"],
  ["2,432.30", "63.434K", "426.438K"],
];
const Levels = ({ rows, side }: { rows: Level[]; side: "ask" | "bid" }) => (
  <Rows>
    {rows.map(([p, q, t]) => (
      <Row
        key={p}
        $side={side}
        style={{ backgroundSize: `${(parseFloat(t) / 574.364) * 576 + (side === "bid" ? 5.5 : 0)}px 100%` }}
      >
        <Cell>{p}</Cell>
        <Cell $right>{q}</Cell>
        <Cell $right>{t}</Cell>
      </Row>
    ))}
  </Rows>
);

const R = c.red;
const G = c.green;
const MODES = [
  { on: true, mr: 14, lines: [[25, R], [20, R], [20, G], [25, G]] },
  { on: false, mr: 14, lines: [[20, G], [20, G], [20, G], [25, G]] },
  { on: false, mr: 0, lines: [[25, R], [20, R], [20, R], [20, R]] },
] as { on: boolean; mr: number; lines: [number, string][] }[];

const INTERVALS: [string, number][] = [
  ["1s", 53], ["1m", 59], ["5m", 60], ["15m", 72], ["1H", 57], ["4H", 59], ["1D", 55],
];

const OrderBook = () => (
  <Book>
    <TabBar $pl={28}>
      <Tab $on $w={135}>Order Book</Tab>
      <Tab $w={168} $ml={12}>Market Trades</Tab>
      <FadeTab>Mark</FadeTab>
      <IconSlot $ml={8} $pt={23}>
        <Stroke size={24} box={24} sw={1.8} color="#a4a6ad" d="M6 1 17 12 6 23" />
      </IconSlot>
      <IconSlot $ml={31} $pt={23}>
        <Stroke size={24} box={24} sw={1.7} color="#75777e" d="M11 22.5H4Q1.5 22.5 1.5 20V4.5Q1.5 2 4 2H19.5Q22 2 22 4.5V11M7 7 12.5 12.5M13 8V13H8M15 15.5H22V22.5H15Z" />
      </IconSlot>
      <IconSlot $ml={15} $pt={22}>
        <Sliders s={25} />
      </IconSlot>
    </TabBar>
    <BookTools>
      {MODES.map((m, i) => (
        <DepthMode key={i} $on={m.on} $mr={m.mr}>
          {m.lines.map(([w, col], j) => (
            <DepthLine key={j} $w={w} $color={col} />
          ))}
        </DepthMode>
      ))}
      <TickPill>
        0.01
        <Caret $ml={9} $color="#868993" />
      </TickPill>
    </BookTools>
    <BookHead>
      <Cell>Price(USDT)</Cell>
      <Cell $right>Quantity(USDT)</Cell>
      <Cell $right>Total(USDT)</Cell>
    </BookHead>
    <Levels rows={ASKS} side="ask" />
    <MidRow>
      <MidPrice>2,432.43</MidPrice>
      <IconSlot $ml={0} $pt={18}>
        <svg width="15" height="21" viewBox="0 0 15 21" fill="none" stroke={c.red} strokeWidth="2.2">
          <path d="M7.5 0V19.3M1 12.8 7.5 19.3 14 12.8" />
        </svg>
      </IconSlot>
      <FairPrice>2,432.44</FairPrice>
    </MidRow>
    <Levels rows={BIDS} side="bid" />
    <Ratio>
      <RatioSide $w={254}>
        <RatioTag>B</RatioTag>
        <RatioPct $pad="0 0 0 62px">44.3%</RatioPct>
      </RatioSide>
      <RatioSide $w={321} $sell>
        <RatioTag>S</RatioTag>
        <RatioPct $pad="0 98px 0 0">55.7%</RatioPct>
      </RatioSide>
    </Ratio>
    <Watermark>
      <svg width="28" height="28" viewBox="0 0 28 28" fill="#dcdde0">
        <path d="M14 0 21 7 18 10 14 6 10 10 7 7ZM3 11 6 14 3 17 0 14ZM25 11 28 14 25 17 22 14ZM14 11 17 14 14 17 11 14ZM7 21 10 18 14 22 18 18 21 21 14 28Z" />
      </svg>
      @ ScalpingX TG Channel
    </Watermark>
  </Book>
);

const DrawingTools = () => (
  <DrawBar>
    <DrawSlot $h={62.8}>
      <Stroke color="#3f74ea" sw={2} d="M22 6V17M22 27V38M6 22H17M27 22H38" />
    </DrawSlot>
    <DrawSlot $h={62.8}>
      <Stroke d="M22 7V18.5M22 25.5V37">
        <circle cx="22" cy="22" r="3.2" />
      </Stroke>
    </DrawSlot>
    <DrawSlot $h={62.8}>
      <Stroke d="M6.5 9H37.5M6.5 17.4H33M6.5 25.6H37.5M10 34H37.5">
        <circle cx="36" cy="17.4" r="3.1" />
        <circle cx="7" cy="34" r="3.1" />
      </Stroke>
    </DrawSlot>
    <DrawSlot $h={62.8}>
      <Stroke d="M5.5 33.4H19.5C24 33.4 26.8 29.5 26.8 26C26.8 21.5 23 18.4 19.3 18.4C12 18.4 12.5 27.5 5.5 33.4ZM28 11C25.8 12 25.3 14.5 26 16.5C27 19.5 30 20.5 32.5 19C35 17.5 38 13.5 40.5 10.6" />
    </DrawSlot>
    <DrawSlot $h={62.8}>
      <Stroke d="M14.2 14.5V11Q14.2 9.6 15.6 9.6H29.8Q31.2 9.6 31.2 11V14.5M22.4 9.6V34.3M18.7 34.3H26" />
    </DrawSlot>
    <DrawSlot $h={62.8}>
      <Stroke d="M14 13.4 10.5 31M16.5 13 18.3 17.8M28.6 13.8 22.5 18.5M31.5 15 34.2 27.2M22.4 21.8 32.5 28.2M18.6 22.8 11.5 31.5">
        <circle cx="14.4" cy="10.6" r="2.9" />
        <circle cx="30.9" cy="12" r="2.9" />
        <circle cx="19.8" cy="20.2" r="2.9" />
        <circle cx="10.1" cy="34" r="2.9" />
        <circle cx="34.8" cy="30" r="2.9" />
      </Stroke>
    </DrawSlot>
    <DrawSlot $h={62.8}>
      <Stroke d="M7.3 8.6V30.5M7.3 12.5H16.2V16.8H20.1V21.4H8M16.2 16.8H8M13 21.4V25.7H8M34.8 14.5V37">
        <circle cx="7.3" cy="33.6" r="3" />
        <circle cx="34.8" cy="11.4" r="3" />
      </Stroke>
    </DrawSlot>
    <DrawSlot $h={62.8}>
      <Stroke d="M22 35.3 8.2 22.5C3 17 6.5 8.5 13.5 8.5C17.5 8.5 20.5 11 22 13.5C23.5 11 26.5 8.5 30.5 8.5C37.5 8.5 41 17 35.8 22.5Z" />
    </DrawSlot>
    <DrawSlot $h={23}><DrawRule /></DrawSlot>
    <DrawSlot $h={67}>
      <Stroke d="M6.6 38.4V35.5L36.5 6.5Q39 4.4 41.2 6V9M23.4 38.4 41.2 20M11.5 31 15.5 34.5M16 26.5 20 30M21 21.5 25 25M26 16.8 30 20.3M31 12 35 15.5" />
    </DrawSlot>
    <DrawSlot $h={54}>
      <Stroke d="M19.8 16.5V26.7M14.7 21.6H24.9M28.2 29.8 33 34.8">
        <circle cx="19.8" cy="21.6" r="11.8" />
      </Stroke>
    </DrawSlot>
    <DrawSlot $h={34}><DrawRule /></DrawSlot>
    <DrawSlot $h={51}>
      <MagnetBox>
        <Stroke d="M10.8 34V19.3A10.8 10.8 0 0 1 32.4 19.3V34H25V19.3A3.4 3.4 0 0 0 18.2 19.3V34ZM10.8 28.3H18.2M25 28.3H32.4" />
      </MagnetBox>
    </DrawSlot>
    <DrawSlot $h={72}>
      <Stroke d="M6.6 28.5V23.5L22.5 8.3Q24.5 6.5 26.5 8.3L28 9.8Q29.8 11.8 28 13.6L12.5 28.5ZM8.5 22 14 27M20 11 25.5 16M10 25 24 12M26 28.5V24.5Q26.5 21.5 29.3 21.5T32.5 24M23.8 28.5H35V37H23.8ZM29.3 31.5V34" />
    </DrawSlot>
    <DrawSlot $h={58}>
      <Stroke d="M13.5 17.5H30Q32.6 17.5 32.6 20V32.5Q32.6 35 30 35H13.5Q11 35 11 32.5V20Q11 17.5 13.5 17.5ZM17 17.5V14.5Q17 10 21.8 10Q25 10 27 13M21.7 24.5V28.5" />
    </DrawSlot>
    <DrawSlot $h={72}>
      <Stroke d="M8.6 17.4Q15 5.5 25 5.5T41.2 17.4Q35 29.4 25 29.4T8.6 17.4ZM29.5 38Q31.5 34 34.5 36T40.5 33.5M36.5 36Q38.5 38.5 41 38">
        <circle cx="25" cy="17.4" r="5.8" />
      </Stroke>
    </DrawSlot>
    <DrawSlot $h={9}><DrawRule /></DrawSlot>
    <DrawSlot $h={78}>
      <Stroke d="M10 13.5H34M17 13V11Q17 9.3 18.7 9.3H25.3Q27 9.3 27 11V13M12 13.5V32Q12 34.9 15 34.9H29Q32 34.9 32 32V13.5M19.2 18V30M24.6 18V30" />
    </DrawSlot>
    <DrawSlot $h={124}>
      <Stroke d="M22 8.5 34.6 17.5 22 26.5 9.4 17.5ZM10.5 22 22 30.5 33.5 22M10.5 26.5 22 35 33.5 26.5" />
    </DrawSlot>
    <Handle>
      <Stroke size={12} box={12} sw={1.6} d="M8 1 4 6 8 11" />
    </Handle>
  </DrawBar>
);

const App = () => (
  <>
    <Global />
    <Page>
      <TopBar>
        <StarSlot>
          <svg width="28" height="28" viewBox="0 0 28 28" fill="none" stroke="#5f6167" strokeWidth="1.8">
            <path d="M14 2.2 17.6 9.8 25.8 10.9 19.8 16.7 21.3 25 14 21 6.7 25 8.2 16.7 2.2 10.9 10.4 9.8Z" strokeLinejoin="round" />
          </svg>
        </StarSlot>
        <CoinSlot><EthLogo /></CoinSlot>
        <Pair>
          <PairName>ETHUSDT Perpetual</PairName>
          <Leverage>500x</Leverage>
        </Pair>
        <Caret $w={17} $h={11} $mt={40} $color="#fff" />
        <VRule $h={70} $ml={30} $mt={10} />
        <BigPrice>2,432.43</BigPrice>
        <Stat $w={104}>
          <StatLabel>Change</StatLabel>
          <StatValue $light $color={c.red}>-3.32%</StatValue>
        </Stat>
        <Stat $w={139}>
          <StatLabel>Index Price</StatLabel>
          <StatValue>2,433.07</StatValue>
        </Stat>
        <Stat $w={122}>
          <StatLabel>Fair Price</StatLabel>
          <StatValue>2,432.44</StatValue>
        </Stat>
        <Stat $w={296}>
          <StatLabel>Funding Rate / Countdown</StatLabel>
          <StatValue>
            <Orange>+0.0100%</Orange>
            <Countdown>/ 03:26:00</Countdown>
          </StatValue>
        </Stat>
        <Stat $w={117} $gap={14}>
          <StatLabel>24h High</StatLabel>
          <StatValue>2,549.10</StatValue>
        </Stat>
        <Stat $w={115} $gap={14}>
          <StatLabel>24h Low</StatLabel>
          <StatValue>2,365.00</StatValue>
        </Stat>
        <Stat $w={202} $gap={14}>
          <StatLabel>24h Volume(ETH)</StatLabel>
          <StatValue>1.767M</StatValue>
        </Stat>
        <Stat $w={233} $gap={14}>
          <StatLabel>24h Turnover(USDT)</StatLabel>
          <StatValue>4.318B</StatValue>
        </Stat>
        <Stat $w={215} $gap={14}>
          <StatLabel>Open Interest (USDT)</StatLabel>
          <StatValue>1.813B</StatValue>
        </Stat>
        <TopSettings><Sliders s={27} /></TopSettings>
      </TopBar>

      <Columns>
        <MainPanel>
          <TabBar $pl={28}>
            <Tab $on $w={65}>Chart</Tab>
            <Tab $w={145} $ls={-0.1}>
              Analysis
              <AiBadge><AiMark color="#10131a" /></AiBadge>
            </Tab>
            <Tab $w={44}>Info</Tab>
            <Tab $w={158}>Trading Rules</Tab>
            <Tab $w={112}>Risk Limit</Tab>
            <BellSlot>
              <Stroke size={24} box={24} sw={2} color="#6a6c73" d="M4 19.5V11Q4 3 12 3T20 11V19.5M0.5 19.8H23.5M12 0.5V3M9.5 22.5H14.5" />
            </BellSlot>
          </TabBar>
          <NewsRow>
            <AiMark color="#fff" w={31} />
            <NewsText>Gambler opens $81.6M BTC and ETH shorts, fade?</NewsText>
          </NewsRow>
          <ToolRow>
            <Intervals>
              {INTERVALS.map(([t, w]) => (
                <Interval key={t} $w={w} $on={t === "15m"}>{t}</Interval>
              ))}
            </Intervals>
            <Caret $ml={9} />
            <VRule $h={28} $ml={12} />
            <IconSlot $ml={34}>
              <svg width="22" height="28" viewBox="0 0 22 28" fill="#8f929c">
                <path d="M1 8H4V4H5.5V8H8V20H5.5V23H4V20H1ZM12 3H15V0H17V3H20V23H17V28H15V23H12Z" />
              </svg>
            </IconSlot>
            <Caret $ml={13} />
            <VRule $h={28} $ml={32} />
            <IconSlot $ml={29}>
              <Stroke size={26} box={26} sw={2} color="#8f929c" d="M2.5 21.5Q6.5 24 7.5 18.5L9.5 6Q10.3 1.8 14 3.2M3.5 10.5H12.5M14.5 14.5 22.5 23.5M22.5 14.5 14.5 23.5" />
            </IconSlot>
            <IconSlot $ml={30}>
              <Stroke size={25} box={25} sw={2} color="#8f929c" d="M5.5 22A11 11 0 1 1 19.5 22ZM12.5 3V6M2.5 13H5.5M19.5 13H22.5M5.8 6 8 8.2M19.2 6 17 8.2M12.5 9.5V14.5">
                <circle cx="12.5" cy="17" r="2.3" />
              </Stroke>
            </IconSlot>
            <IconSlot $ml={30}>
              <Stroke size={24} box={24} sw={2} color="#8f929c" d="M1.5 1.5H9V9H1.5ZM1.5 15H9V22.5H1.5ZM13 2H24M13 8.5H24M13 15.5H24M13 22H24" />
            </IconSlot>
            <IconSlot $ml={31}>
              <Stroke size={28} box={28} sw={2.2} color="#8f929c" d="M2 7.5H8L10 4H18L20 7.5H26V24H2Z">
                <circle cx="14" cy="15.3" r="4" />
              </Stroke>
            </IconSlot>
            <LastPrice>Last Price</LastPrice>
            <Caret $ml={8} />
            <Segmented>
              <Segment $w={105}>Original</Segment>
              <Segment $on $w={152}>TradingView</Segment>
              <Segment $w={88}>Depth</Segment>
            </Segmented>
            <IconSlot $ml={30}>
              <Stroke size={28} box={28} sw={2} color="#75777e" d="M3.5 2H24.5Q26 2 26 3.5V24.5Q26 26 24.5 26H3.5Q2 26 2 24.5V3.5Q2 2 3.5 2ZM2 8H26" />
            </IconSlot>
            <IconSlot $ml={37}>
              <Stroke size={25} box={25} sw={2.2} color="#75777e" d="M1.5 8.5V1.5H8.5M1.5 1.5 9 9M16.5 1.5H23.5V8.5M23.5 1.5 16 9M1.5 16.5V23.5H8.5M1.5 23.5 9 16M16.5 23.5H23.5V16.5M23.5 23.5 16 16" />
            </IconSlot>
          </ToolRow>
          <ChartBody>
            <DrawingTools />
            <ChartCol>
              <PriceChart />
              <BottomBar>
                <Stroke size={32} box={32} sw={1.8} d="M3 11V6Q3 4 5 4H27.5Q30 4 30 6.5V25.5Q30 28 27.5 28H16M3 10.5H30M10 1V6M23 1V6M1 22H13.5M8.5 16.5 14 22 8.5 27.5" />
                <Spacer />
                <BottomText $w={190} $ls={0.55}>19:33:59 (UTC+7)</BottomText>
                <VRule $h={39} $ml={28} $w={2} $color="#47494f" />
                <BottomText $ml={24} $w={23}>%</BottomText>
                <BottomText $ml={24} $w={33}>log</BottomText>
                <BottomText $ml={23} $w={52} $color="#4f6ff5">Auto</BottomText>
              </BottomBar>
            </ChartCol>
          </ChartBody>
        </MainPanel>
        <OrderBook />
      </Columns>
    </Page>
  </>
);

export default App;
